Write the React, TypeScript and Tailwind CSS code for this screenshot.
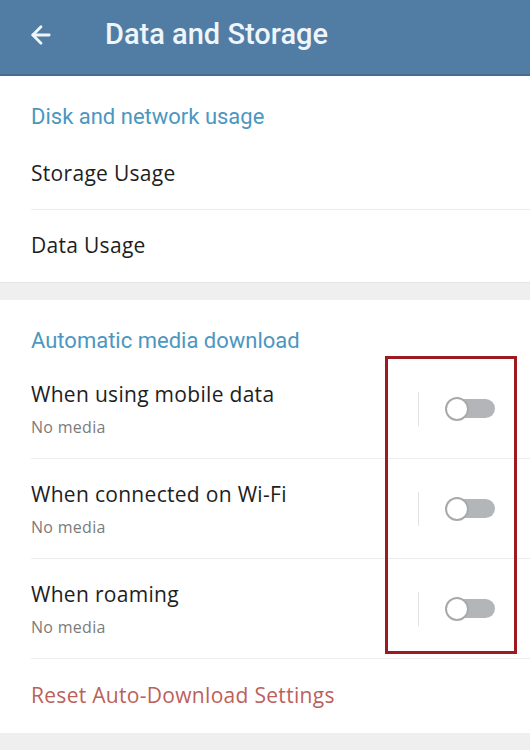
import { ArrowLeft } from "lucide-react";

const itemFont = { fontFamily: '"Open Sans", "Noto Sans", sans-serif', letterSpacing: "0.3px" };

function SectionLabel({ children }: { children: string }) {
  return (
    <div className="pl-[31px] pt-[28px] text-[22px] leading-[25px] text-[#4b97c0] font-['Roboto',sans-serif]">
      {children}
    </div>
  );
}

function Toggle() {
  return (
    <div className="flex items-center">
      <div className="w-px h-[34px] bg-[#e2e2e2] mr-[26px]" />
      <div className="relative w-[50px] h-[24px] flex items-center">
        <div className="absolute left-[6px] right-0 h-[19px] rounded-full bg-[#b3b6b8]" />
        <div className="relative w-[24px] h-[24px] rounded-full bg-white border-2 border-[#a7aaac]" />
      </div>
    </div>
  );
}

function MediaRow({ title }: { title: string }) {
  return (
    <div className="ml-[31px] flex items-center justify-between border-b border-[#ececec] pr-[35px] h-[100px]">
      <div className="flex flex-col">
        <span className="text-[21px] leading-[26px] font-medium text-[#1e1e1e]" style={itemFont}>
          {title}
        </span>
        <span className="mt-[10px] text-[16px] leading-[20px] text-[#7b7b7b]" style={itemFont}>
          No media
        </span>
      </div>
      <Toggle />
    </div>
  );
}

export default function App() {
  return (
    <div className="relative w-[530px] h-[750px] bg-[#efefef] overflow-hidden">
      <header className="h-[76px] bg-[#517ca3] border-b-2 border-[#466d91] flex items-center pb-[4px]">
        <ArrowLeft className="ml-[27px] text-[#eef5fb]" size={28} strokeWidth={2.4} />
        <h1 className="ml-[50px] text-[29px] font-medium text-[#eef5fb] font-['Roboto',sans-serif]">
          Data and Storage
        </h1>
      </header>

      <section className="bg-white">
        <SectionLabel>Disk and network usage</SectionLabel>
        <div className="ml-[31px] mt-[10px] h-[71px] flex items-center border-b border-[#ececec]">
          <span className="text-[21px] font-medium text-[#1e1e1e]" style={itemFont}>Storage Usage</span>
        </div>
        <div className="pl-[31px] h-[72px] flex items-center">
          <span className="text-[21px] font-medium text-[#1e1e1e]" style={itemFont}>Data Usage</span>
        </div>
      </section>

      <div className="h-[18px] border-t border-[#e4e4e4]" />

      <section className="bg-white">
        <SectionLabel>Automatic media download</SectionLabel>
        <div className="h-[6px]" />
        <MediaRow title="When using mobile data" />
        <MediaRow title="When connected on Wi-Fi" />
        <MediaRow title="When roaming" />
        <div className="pl-[31px] h-[74px] flex items-center">
          <span className="text-[21px] font-medium text-[#bd5f5b]" style={itemFont}>
            Reset Auto-Download Settings
          </span>
        </div>
      </section>

      <div className="absolute left-[385px] top-[356px] w-[132px] h-[298px] border-[3px] border-[#9c1b20]" />
    </div>
  );
}
